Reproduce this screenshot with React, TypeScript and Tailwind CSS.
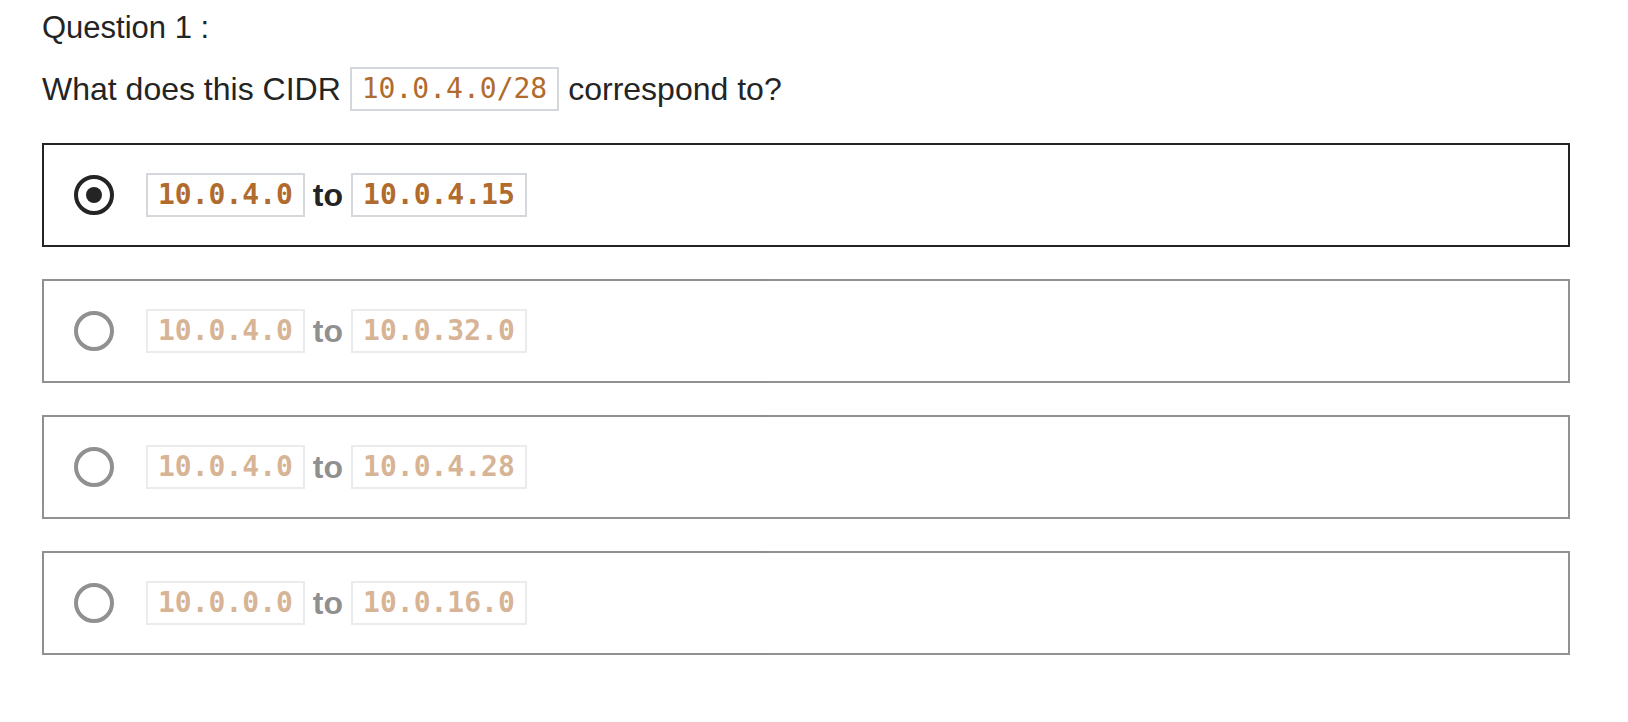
import React from 'react';

interface Option {
  from: string;
  to: string;
  selected: boolean;
}

const options: Option[] = [
  { from: '10.0.4.0', to: '10.0.4.15', selected: true },
  { from: '10.0.4.0', to: '10.0.32.0', selected: false },
  { from: '10.0.4.0', to: '10.0.4.28', selected: false },
  { from: '10.0.0.0', to: '10.0.16.0', selected: false },
];

const Code: React.FC<{ children: React.ReactNode; bold?: boolean }> = ({ children, bold }) => (
  <span
    className={`inline-block h-[44px] border-2 border-[#d4d8dc] px-[10px] text-[28px] leading-[40px] text-[#b06b2d] font-['DejaVu_Sans_Mono',monospace] ${
      bold ? 'font-bold' : 'font-normal'
    }`}
  >
    {children}
  </span>
);

const Radio: React.FC<{ checked: boolean }> = ({ checked }) => (
  <span className="flex h-[40px] w-[40px] shrink-0 items-center justify-center rounded-full border-4 border-[#242424]">
    {checked && <span className="h-[16px] w-[16px] rounded-full bg-[#242424]" />}
  </span>
);

const App: React.FC = () => {
  return (
    <div className="min-h-screen bg-white pl-[42px] pr-[58px] pt-[8px] text-[#242424] font-['Liberation_Sans',Arial,sans-serif]">
      <div className="text-[31px] leading-[40px]">Question 1 :</div>

      <div className="mt-[19px] flex items-center gap-[9px] text-[32px] leading-[44px]">
        <span>What does this CIDR</span>
        <Code>10.0.4.0/28</Code>
        <span>correspond to?</span>
      </div>

      <div className="mt-[32px] flex flex-col gap-[32px]">
        {options.map((opt, i) => (
          <div
            key={i}
            className={`flex items-center gap-[32px] border-2 border-[#242424] px-[30px] py-[28px] ${
              opt.selected ? '' : 'opacity-50'
            }`}
          >
            <Radio checked={opt.selected} />
            <div className="flex items-center gap-[8px]">
              <Code bold>{opt.from}</Code>
              <span className="text-[32px] font-bold leading-[44px]">to</span>
              <Code bold>{opt.to}</Code>
            </div>
          </div>
        ))}
      </div>
    </div>
  );
};

export default App;
